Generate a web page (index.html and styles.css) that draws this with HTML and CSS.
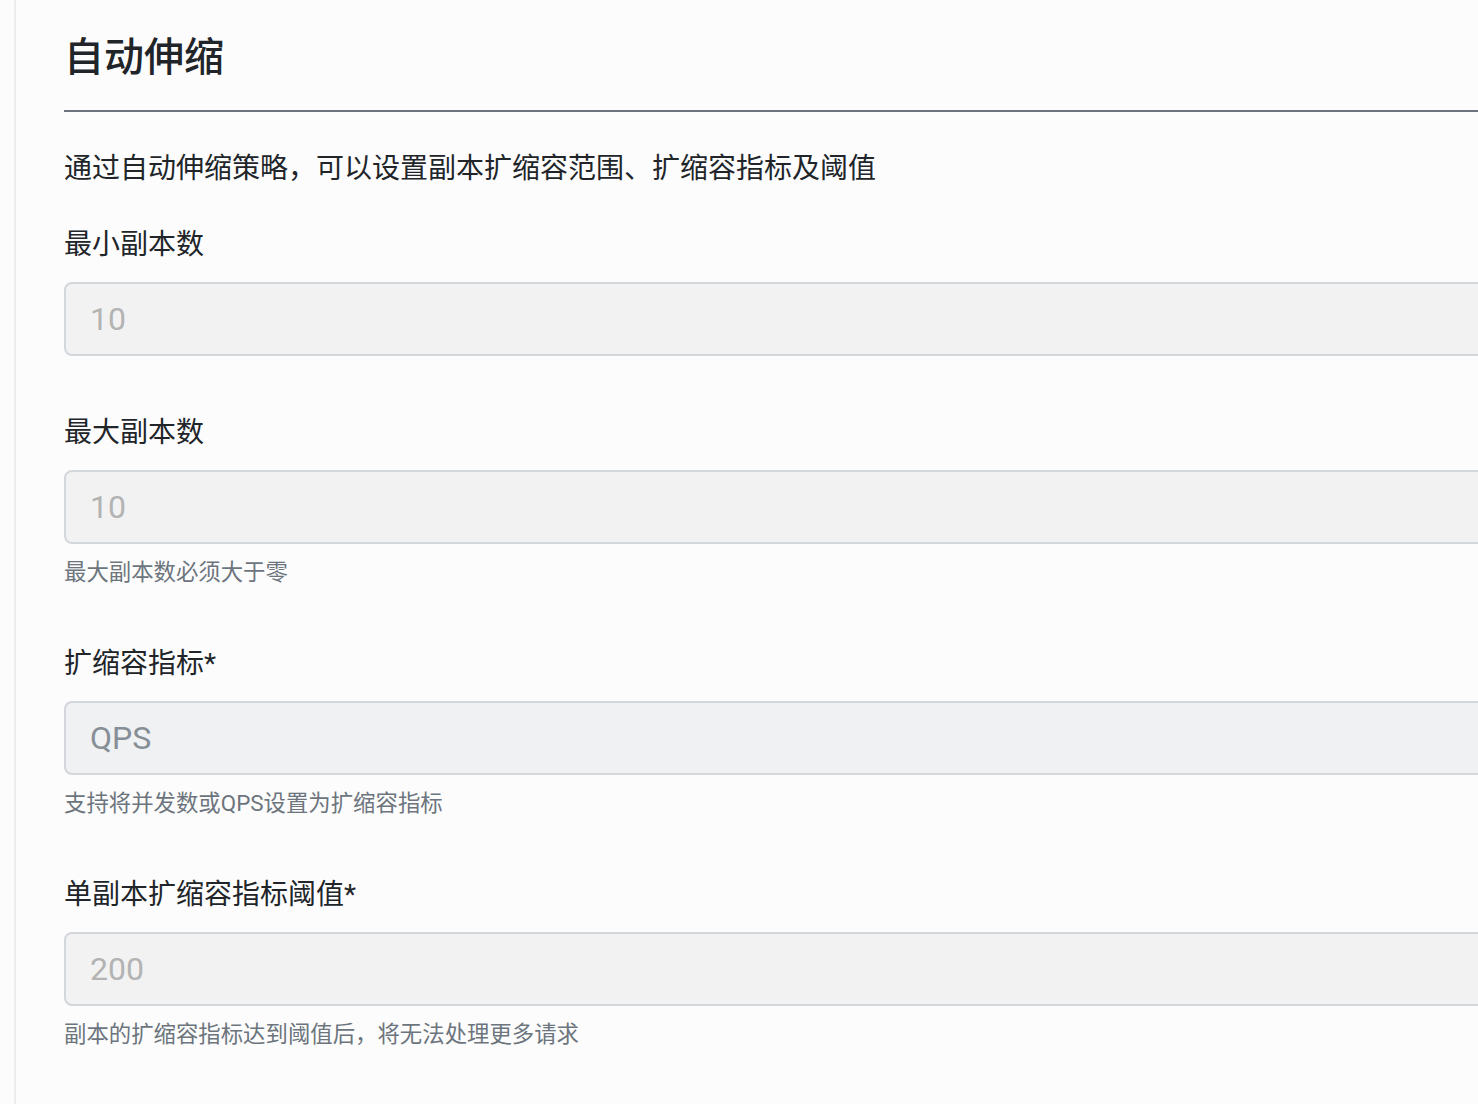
FILE: index.html
```html
<!DOCTYPE html>
<html lang="zh-CN">
<head>
  <meta charset="UTF-8">
  <meta name="viewport" content="width=device-width, initial-scale=1.0">
  <title>自动伸缩</title>
  <link rel="stylesheet" href="styles.css">
</head>
<body>
  <div class="page">
    <h1 class="title">自动伸缩</h1>
    <p class="desc">通过自动伸缩策略，可以设置副本扩缩容范围、扩缩容指标及阈值</p>

    <div class="field">
      <label for="minReplicas">最小副本数</label>
      <input id="minReplicas" class="form-control" type="text" value="10" disabled>
    </div>

    <div class="field">
      <label for="maxReplicas">最大副本数</label>
      <input id="maxReplicas" class="form-control" type="text" value="10" disabled>
      <div class="help">最大副本数必须大于零</div>
    </div>

    <div class="field">
      <label for="metric">扩缩容指标*</label>
      <input id="metric" class="form-control select" type="text" value="QPS" disabled>
      <div class="help">支持将并发数或QPS设置为扩缩容指标</div>
    </div>

    <div class="field">
      <label for="threshold">单副本扩缩容指标阈值*</label>
      <input id="threshold" class="form-control" type="text" value="200" disabled>
      <div class="help">副本的扩缩容指标达到阈值后，将无法处理更多请求</div>
    </div>
  </div>
</body>
</html>
```

FILE: styles.css
```css
html, body {
  overflow: hidden;
}
body {
  margin: 0;
  background-color: #fcfcfc;
  color: #212529;
  font-family: Roboto, "Noto Sans CJK SC", sans-serif;
}
.page {
  box-sizing: border-box;
  min-height: 100vh;
  width: 1540px;
  margin-left: 14px;
  padding: 32px 0 40px 48px;
  border-left: 2px solid #ededed;
}
.title {
  margin: 0;
  padding: 2px 0 28px;
  border-bottom: 2px solid #6c757d;
  font-size: 40px;
  line-height: 48px;
  font-weight: 500;
  color: #212529;
}
.desc {
  margin: 36px 0 32px;
  font-size: 28px;
  line-height: 42px;
}
.field {
  margin-bottom: 54px;
}
.field label {
  display: block;
  padding-top: 2px;
  margin-bottom: 16px;
  font-size: 28px;
  line-height: 42px;
}
.form-control {
  display: block;
  box-sizing: border-box;
  width: 100%;
  height: 74px;
  margin: 0;
  padding: 0 24px;
  border: 2px solid #d3d7db;
  border-radius: 8px;
  background-color: #f2f2f2;
  color: #b3b3b3;
  font-family: Roboto, "Noto Sans CJK SC", sans-serif;
  font-size: 32px;
}
.form-control.select {
  background-color: #eff1f3;
  color: #868e96;
}
.help {
  margin-top: 12px;
  margin-bottom: -2px;
  font-size: 22.4px;
  line-height: 33px;
  color: #6c757d;
}
```
